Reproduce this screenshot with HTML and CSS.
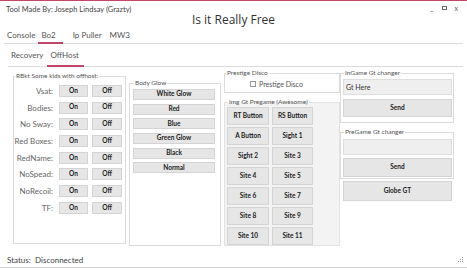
FILE: index.html
```html
<!DOCTYPE html>
<html>
<head>
<meta charset="utf-8">
<link rel="stylesheet" href="styles.css">
</head>
<body>
<div class="window">
  <header class="titlebar">
    <div class="credit">Tool Made By: Joseph Lindsay (Grazty)</div>
    <h1 class="title">Is it Really Free</h1>
    <div class="controls"><span class="min">_</span><span class="max"></span><span class="close">x</span></div>
  </header>
  <nav class="tabs main-tabs">
    <span class="tab">Console</span><span class="tab active">Bo2</span><span class="tab">Ip Puller</span><span class="tab">MW3</span>
  </nav>
  <nav class="tabs sub-tabs">
    <span class="tab">Recovery</span><span class="tab active">OffHost</span>
  </nav>
  <main class="content">
    <fieldset class="box mods">
      <legend>RBkt Some kids with offhost:</legend>
      <div class="mod-grid">
        <span class="lbl">Vsat:</span><button class="btn">On</button><button class="btn">Off</button>
        <span class="lbl">Bodies:</span><button class="btn">On</button><button class="btn">Off</button>
        <span class="lbl">No Sway:</span><button class="btn">On</button><button class="btn">Off</button>
        <span class="lbl">Red Boxes:</span><button class="btn">On</button><button class="btn">Off</button>
        <span class="lbl">RedName:</span><button class="btn">On</button><button class="btn">Off</button>
        <span class="lbl">NoSpead:</span><button class="btn">On</button><button class="btn">Off</button>
        <span class="lbl">NoRecoil:</span><button class="btn">On</button><button class="btn">Off</button>
        <span class="lbl">TF:</span><button class="btn">On</button><button class="btn">Off</button>
      </div>
    </fieldset>
    <fieldset class="box glow">
      <legend>Body Glow</legend>
      <div class="glow-list">
        <button class="btn">White Glow</button>
        <button class="btn">Red</button>
        <button class="btn">Blue</button>
        <button class="btn">Green Glow</button>
        <button class="btn">Black</button>
        <button class="btn">Normal</button>
      </div>
    </fieldset>
    <div class="col col3">
      <fieldset class="box prestige">
        <legend>Prestige Disco</legend>
        <label class="check"><span class="checkbox"></span>Prestige Disco</label>
      </fieldset>
      <fieldset class="box imggt">
        <legend>Img Gt Pregame (Awesome)</legend>
        <div class="img-grid">
          <button class="btn">RT Button</button><button class="btn">RS Button</button>
          <button class="btn">A Button</button><button class="btn">Sight 1</button>
          <button class="btn">Sight 2</button><button class="btn">Site 3</button>
          <button class="btn">Site 4</button><button class="btn">Site 5</button>
          <button class="btn">Site 6</button><button class="btn">Site 7</button>
          <button class="btn">Site 8</button><button class="btn">Site 9</button>
          <button class="btn">Site 10</button><button class="btn">Site 11</button>
        </div>
      </fieldset>
    </div>
    <div class="col col4">
      <fieldset class="box gt ingame">
        <legend>InGame Gt changer</legend>
        <div class="field">Gt Here</div>
        <button class="btn wide">Send</button>
      </fieldset>
      <fieldset class="box gt pregame">
        <legend>PreGame Gt changer</legend>
        <div class="field"></div>
        <button class="btn wide">Send</button>
      </fieldset>
      <button class="btn globe">Globe GT</button>
    </div>
  </main>
  <footer class="status">
    <span class="status-label">Status:</span><span class="status-value">Disconnected</span>
    <svg class="grip" width="6" height="6" viewBox="0 0 6 6"><rect x="4" y="0" width="1" height="1" fill="#999"/><rect x="2" y="2" width="1" height="1" fill="#999"/><rect x="4" y="2" width="1" height="1" fill="#999"/><rect x="0" y="4" width="1" height="1" fill="#999"/><rect x="2" y="4" width="1" height="1" fill="#999"/><rect x="4" y="4" width="1" height="1" fill="#999"/></svg>
  </footer>
</div>
</body>
</html>
```
FILE: styles.css
```css
* { box-sizing: border-box; }
html, body { margin: 0; padding: 0; background: #fff; }
body { font-family: Lato, "Open Sans", sans-serif; color: #444; }

.window {
  width: 467px;
  height: 270px;
  border-top: 1px solid #c4476a;
  display: flex;
  flex-direction: column;
  overflow: hidden;
}

.titlebar {
  height: 28px;
  display: grid;
  grid-template-columns: 1fr auto 1fr;
  align-items: start;
}
.credit {
  font-size: 7.5px;
  line-height: 10px;
  padding: 4px 0 0 6px;
  color: #444;
  white-space: nowrap;
}
.title {
  margin: 0;
  padding-top: 11px;
  font-size: 12px;
  line-height: 16px;
  font-weight: 400;
  color: #333;
  font-family: "Open Sans", Lato, sans-serif;
}
.controls {
  justify-self: end;
  display: flex;
  align-items: center;
  gap: 8px;
  padding: 2px 9px 0 0;
  font-size: 7px;
  line-height: 10px;
  color: #555;
}
.controls .max {
  width: 5px;
  height: 4px;
  border: 1px solid #666;
}

.tabs {
  display: flex;
  align-items: flex-end;
  border-bottom: 1px solid #dcdcdc;
  font-size: 8px;
  color: #555;
}
.tab {
  line-height: 12px;
  height: 14px;
  white-space: nowrap;
}
.tab.active {
  border-bottom: 2px solid #c0476a;
  margin-bottom: -1px;
  height: 15px;
}
.main-tabs { height: 15px; margin: 0 4px 0 4px; }
.main-tabs .tab:nth-child(1) { padding: 0 3px 0 3px; }
.main-tabs .tab:nth-child(2) { padding: 0 7px 0 3px; }
.main-tabs .tab:nth-child(3) { padding: 0 4px 0 10px; }
.main-tabs .tab:nth-child(4) { padding: 0 4px; }

.sub-tabs { height: 23px; margin: 0 4px 0 8px; }
.sub-tabs .tab { height: 18px; line-height: 14px; }
.sub-tabs .tab.active { height: 19px; }
.sub-tabs .tab:nth-child(1) { padding: 0 4px 0 3px; }
.sub-tabs .tab:nth-child(2) { padding: 0 5px 0 3px; }

.content {
  height: 179px;
  display: flex;
  align-items: stretch;
  padding-left: 13px;
}

.box {
  margin: 0;
  padding: 0;
  border: 1px solid #dcdcdc;
  min-width: 0;
}
.box legend {
  font-size: 6.5px;
  line-height: 8px;
  padding: 0 1px;
  margin-left: 1px;
  color: #555;
  white-space: nowrap;
}

.btn {
  margin: 0;
  padding: 0;
  font-family: Lato, "Open Sans", sans-serif;
  font-size: 6.5px;
  font-weight: 700;
  color: #222;
  background: #e6e6e6;
  border: 1px solid #d4d4d4;
  border-radius: 0;
  line-height: 1;
}

/* column 1 */
.mods {
  width: 113px;
  margin-top: 5px;
  margin-bottom: 2px;
  padding: 5px 3px 0 0;
}
.mod-grid {
  display: grid;
  grid-template-columns: 40px 30px 30px;
  grid-auto-rows: 12px;
  column-gap: 4px;
  row-gap: 4.7px;
}
.mod-grid .lbl {
  justify-self: end;
  font-size: 8px;
  line-height: 12px;
  color: #666;
  white-space: nowrap;
  background: #fff;
  margin-right: 1px;
}
.mod-grid .lbl + .btn { margin-left: 1px; }

/* column 2 */
.glow {
  width: 92px;
  margin-top: 12px;
  margin-left: 3px;
  padding: 2px 5px 0 3px;
}
.glow-list {
  display: flex;
  flex-direction: column;
  gap: 3.7px;
}
.glow-list .btn { height: 11px; width: 82px; }

/* column 3 */
.col { display: flex; flex-direction: column; }
.col3 { width: 116px; margin-left: 3px; }
.prestige {
  margin-top: 2px;
  height: 25px;
  padding: 0;
}
.check {
  display: flex;
  align-items: center;
  gap: 3px;
  font-size: 7px;
  line-height: 12px;
  color: #555;
  padding: 1px 0 0 25px;
}
.checkbox {
  width: 6px;
  height: 6px;
  border: 1px solid #999;
  background: #fff;
}
.imggt {
  flex: 1;
  margin-top: 5px;
  padding: 1px 0 0 2px;
  background: #f3f3f3;
  border-color: #e2e2e2;
}
.img-grid {
  display: grid;
  grid-template-columns: 42px 41px;
  grid-auto-rows: 18px;
  column-gap: 3px;
  row-gap: 2px;
}

/* column 4 */
.col4 { width: 114px; }
.gt { padding: 2px 1px 5px 2px; display: flex; flex-direction: column; }
.ingame { margin-top: 2px; gap: 4px; }
.pregame { margin-top: 5px; padding-top: 3px; padding-bottom: 1px; gap: 3px; }
.field {
  height: 16px;
  width: 109px;
  background: #efefef;
  border: 1px solid #dedede;
  font-size: 7px;
  line-height: 14px;
  padding-left: 2px;
  color: #333;
}
.btn.wide { width: 109px; height: 18px; }
.pregame .btn.wide { height: 19px; }
.globe { width: 109px; height: 20px; margin: 2px 0 0 3px; }

/* status */
.status {
  height: 22px;
  display: flex;
  align-items: flex-end;
  border-bottom: 1px solid #cfcfcf;
  font-size: 8px;
  line-height: 12px;
  color: #444;
  padding: 0 3px 1px 7px;
}
.status-label { width: 28px; }
.status-value { flex: 1; }
.grip { margin-bottom: 3px; }
```
